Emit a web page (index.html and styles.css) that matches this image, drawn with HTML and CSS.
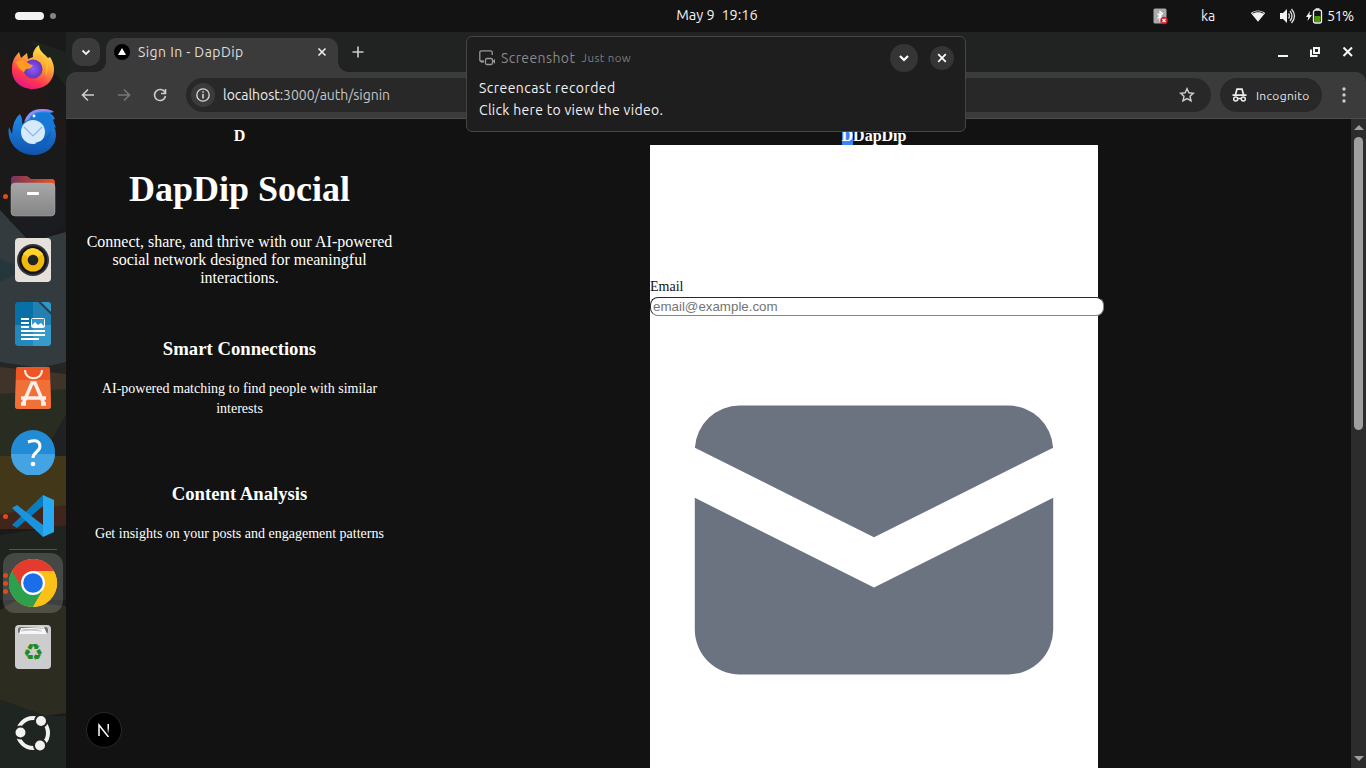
FILE: index.html
```html
<!DOCTYPE html>
<html lang="en">
<head>
<meta charset="utf-8">
<title>Sign In - DapDip</title>
<link rel="stylesheet" href="styles.css">
</head>
<body>
<header class="topbar">
  <div class="workspaces"><i class="pill"></i><i class="dot"></i></div>
  <div class="clock">May 9&nbsp; 19:16</div>
  <div class="status">
    <svg class="bt" width="15" height="17" viewBox="0 0 15 17"><rect x=".5" y=".5" width="13" height="15" rx="1.5" fill="#aaa"/><path d="M4.500 5.500l5 5-2.500 2v-9l2.500 2-5 5" fill="none" stroke="#fff" stroke-width="1.200"/><circle cx="11" cy="12.500" r="3.700" fill="#d3202f"/><path d="M9.500 11l3 3m0-3l-3 3" stroke="#fff" stroke-width="1.200"/></svg>
    <span class="lang">ka</span>
    <svg class="wifi" width="16" height="14" viewBox="0 0 16 14"><path d="M.8 4C5 .5 11 .5 15.200 4L8 12.800Z" fill="#f2f2f2"/><path d="M2.500 4.300C6 2.200 10 2.200 13.500 4.300" fill="none" stroke="#131313" stroke-width="1"/></svg>
    <svg class="sound" width="17" height="16" viewBox="0 0 17 16"><path d="M1 5h3l4-4v14l-4-4H1z" fill="#f2f2f2"/><path d="M9.500 5.500q2 2.500 0 5M11 3q4 5 0 10M12.500 1q6 7 0 14" fill="none" stroke="#ddd" stroke-width="1.300"/></svg>
    <svg class="battery" width="17" height="16" viewBox="0 0 17 16"><path d="M4 3L0 9h2.300L1.500 13 6 7H3.500z" fill="#f2f2f2"/><rect x="7.500" y="2" width="8" height="13" rx="2" fill="none" stroke="#f2f2f2" stroke-width="1.300"/><path d="M9.500 1h4" stroke="#f2f2f2" stroke-width="1.500"/><rect x="8.500" y="8" width="6" height="6" fill="#4e9a06"/></svg>
    <span class="percent">51%</span>
  </div>
</header>
<div class="desktop">
  <nav class="dock">
    <svg class="wallpaper" width="66" height="736" viewBox="0 0 66 736"><path fill="#1a1a1b" d="M0 0h66v736H0z"/><path fill="#211918" d="M0 18l12 12 54 58v25L22 85 0 115z"/><path fill="#1d241d" d="M30 8l36 12v35z"/><path fill="#343b3e" d="M0 178l30 32 36-10v192H0z"/><path fill="#1a1c20" d="M9 188l28 24 27-19V165z"/><path fill="#26363d" d="M0 226l24 12-24 12z"/><path fill="#252523" d="M0 330l40 6 26-6v14H0z"/><path fill="#40332a" d="M0 335l66 7v40H0z"/><path fill="#292c20" d="M0 362l66-5v70H0z"/><path fill="#202123" d="M66 382L44 422l22 10z"/><path fill="#423719" d="M0 424h66v58H0z"/><path fill="#40251c" d="M0 482l66-9v24H0z"/><path fill="#20241f" d="M0 503l66-10v75H0z"/><path fill="#2c2d20" d="M0 578l15-9 51 5v107l-20 3-46-16z"/><path fill="#1f2521" d="M0 668l46 16h20v52H0z"/></svg>
    <div class="app"><svg width="44" height="46" viewBox="0 0 44 46"><defs><linearGradient id="ff" x1=".8" y1="0" x2=".3" y2="1"><stop offset="0" stop-color="#fff44f"/><stop offset=".4" stop-color="#ffa436"/><stop offset=".75" stop-color="#ff3750"/><stop offset="1" stop-color="#e31587"/></linearGradient><radialGradient id="fp"><stop offset="0" stop-color="#9059ff"/><stop offset="1" stop-color="#6137b9"/></radialGradient></defs><path d="M4 12l4-5 2 6 6-5 1 6 5-2C21 7 25 2 28 0c0 5 4 8 7 11l2 2 2-1c4 6 5 13 3 19-3 8-10 13-20 13C9 44 0 35 1 23c0-4 1-8 3-11z" fill="url(#ff)"/><circle cx="22" cy="24" r="9.500" fill="url(#fp)"/><path d="M5 17q7-4 12 1 2 2 5 2-1 4-7 4l-2 3q-6-3-8-10z" fill="#ff9a22"/><path d="M27 12q7 2 8 7v12q3-9 1-16l-6-5z" fill="#ffbd32"/></svg></div>
    <div class="app"><svg width="50" height="48" viewBox="0 0 50 48"><defs><linearGradient id="tb" x2="0" y2="1"><stop stop-color="#2492f4"/><stop offset="1" stop-color="#0f53ac"/></linearGradient></defs><path d="M1 19l3 7Q5 11 12 6q3 5 2 10l3-2Q20 1 33 1q9 0 13 3l-4 1q4 3 5 6l-3 1q3 4 4 8l-2-1q2 3 2 7c0 13-10 21-23 21C10 47-2 34 1 19z" fill="url(#tb)"/><path d="M16 14Q20 2 33 1q9 0 13 3-13-2-20 1-3 2-5 6z" fill="#9c8bef"/><path d="M22 10q6-7 19-5 5 5 5 13l-9 7-12-10z" fill="#1878d8"/><circle cx="25" cy="24" r="12" fill="#d6eafb"/><path d="M16 19l9 9 9-9" fill="none" stroke="#86b8e8" stroke-width="1.200"/><circle cx="26" cy="8" r="1.400" fill="#fff"/><path d="M27 35q11-2 16-13-1 18-19 22l9-6z" fill="#0f61be"/></svg></div>
    <div class="app"><i class="run one"></i><svg width="46" height="42" viewBox="0 0 46 42"><defs><linearGradient id="fo"><stop stop-color="#75345b"/><stop offset="1" stop-color="#e95420"/></linearGradient><linearGradient id="fg" x2="0" y2="1"><stop stop-color="#a7a7a7"/><stop offset="1" stop-color="#858585"/></linearGradient></defs><path d="M1 4q0-3 3-3h13l4 3h21q3 0 3 4v10H1z" fill="url(#fo)"/><rect x="1" y="8" width="44" height="33" rx="4" fill="url(#fg)" stroke="#ababab" stroke-width=".5"/><rect x="17" y="17" width="12" height="3" rx="1" fill="#fff"/></svg></div>
    <div class="app"><svg width="38" height="46" viewBox="0 0 38 46"><rect x="1" y="1" width="36" height="44" rx="4" fill="#e5e1da"/><circle cx="19" cy="23" r="16" fill="#34343b"/><circle cx="19" cy="23" r="14" fill="#11151c"/><circle cx="19" cy="23" r="11.500" fill="#f0b90b"/><path d="M19 23L9 17q9-12 20 0z" fill="#ffd22d"/><circle cx="19" cy="23" r="5.300" fill="#222528"/></svg></div>
    <div class="app"><svg width="38" height="46" viewBox="0 0 38 46"><path d="M4 1h20l13 13v27q0 4-4 4H5q-4 0-4-4V5q0-4 3-4z" fill="#0870a6"/><path d="M19 1h5l13 13v10H19z" fill="#2380b2"/><path d="M1 24h36v17q0 4-4 4H5q-4 0-4-4z" fill="#2389bd"/><path d="M19 24h18v17q0 4-4 4H19z" fill="#369acb"/><path d="M27 1h7q3 0 3 3v7z" fill="#279bcc"/><path d="M7 18h8M7 22h8M7 26h8M7 30h24M7 34h24M7 38h18" stroke="#fff" stroke-width="2"/><rect x="17.500" y="17.500" width="13" height="9" rx="1" fill="#3098cc" stroke="#fff"/><path d="M18 26v-2l3-3 3 3 3-2 3 3v1z" fill="#fff"/></svg></div>
    <div class="app"><svg width="36" height="44" viewBox="0 0 36 44"><path d="M2 1h32q1 0 1 3l1 36q0 3-3 3H3q-3 0-3-3L1 4q0-3 1-3z" fill="#ee5723"/><path d="M1 14h34l1 26q0 3-3 3H3q-3 0-3-3z" fill="#f17038"/><path d="M10 4c0 11 17 11 17 0" fill="none" stroke="#fff1e9" stroke-width="2"/><path d="M8 38l9-21h3l9 21M6 32h25M6 38h5m15 0h5" fill="none" stroke="#fff1e9" stroke-width="3.500"/></svg></div>
    <div class="app"><svg width="46" height="46" viewBox="0 0 46 46"><circle cx="23" cy="23" r="22" fill="#228bd5"/><path d="M1 25h44a22 22 0 01-44 0z" fill="#44a4e3"/><path d="M18 13q11-4 12 4c0 6-7 6-7 12" fill="none" stroke="#fff" stroke-width="3"/><circle cx="23" cy="35" r="2.300" fill="#fff"/></svg></div>
    <div class="app"><i class="run one"></i><svg width="44" height="44" viewBox="0 0 44 44"><path d="M1 31L32 1v11L6 34z" fill="#087cc1"/><path d="M1 14l5-3 26 20v12z" fill="#1b94dc"/><path d="M32 1l11 5v32l-11 5z" fill="#28a9f2"/></svg></div>
    <i class="divider"></i>
    <div class="app chrome-app"><i class="run three"></i><svg width="48" height="48" viewBox="0 0 48 48"><circle cx="24" cy="24" r="24" fill="#fbc116"/><path d="M24 24L3.200 12A24 24 0 0144.800 12z" fill="#e33b2e"/><path d="M24 24L3.200 12A24 24 0 0024 48l10.400-18z" fill="#2da04e"/><path d="M24 12h20.800A24 24 0 0124 48l10.400-18z" fill="#fbc116"/><path d="M3.200 12L13.600 30A12 12 0 0124 12z" fill="#e33b2e"/><circle cx="24" cy="24" r="12" fill="#fff"/><circle cx="24" cy="24" r="9.800" fill="#1a6fe8"/></svg></div>
    <div class="app"><svg width="38" height="46" viewBox="0 0 38 46"><rect x="1" y="1" width="36" height="44" rx="4" fill="#cdcdcd"/><rect x="4" y="3" width="30" height="7" rx="3" fill="#6f6f6f"/><path d="M5 10l2-6 23-1 3 7z" fill="#f8f8f8"/><path d="M8 5l20 2M7 7l24-3" stroke="#aaa" stroke-width=".7"/><text class="recycle" x="19" y="36" text-anchor="middle">♻</text></svg></div>
    <div class="app grid-app"><svg width="36" height="36" viewBox="0 0 36 36"><circle cx="18" cy="18" r="15" fill="none" stroke="#f2f2f2" stroke-width="4"/><g fill="#f2f2f2" stroke="#202521" stroke-width="2"><circle cx="5.500" cy="17.500" r="6"/><circle cx="26" cy="6" r="6"/><circle cx="25" cy="30.500" r="6"/></g></svg></div>
  </nav>
  <main class="browser">
    <div class="tabs">
      <span class="tabsearch"><svg width="10" height="7" viewBox="0 0 10 7"><path d="M1.500 1.500L5 5l3.500-3.500" fill="none" stroke="#eee" stroke-width="1.800"/></svg></span>
      <div class="tab"><svg width="16" height="16" viewBox="0 0 16 16"><circle cx="8" cy="8" r="8"/><path d="M8 4l4 7H4z" fill="#fff"/></svg><span class="tabtitle">Sign In - DapDip</span><svg class="tabclose" width="10" height="10" viewBox="0 0 10 10"><path d="M1.500 1.500l7 7m0-7l-7 7" stroke="#eee" stroke-width="1.600"/></svg></div>
      <svg class="plus" width="12" height="12" viewBox="0 0 12 12"><path d="M6 .5v11M.5 6h11" stroke="#ccc" stroke-width="1.600"/></svg>
      <div class="winbuttons"><svg width="76" height="14" viewBox="0 0 76 14"><path d="M1 11h10" stroke="#f5f5f5" stroke-width="2"/><path d="M37 3h5v5h-5zM34 4.500V11h6.500" fill="none" stroke="#f5f5f5" stroke-width="2"/><path d="M66.500 2.500l8.500 8.500m0-8.500L66.500 11" stroke="#f5f5f5" stroke-width="2"/></svg></div>
    </div>
    <div class="toolbar">
      <svg class="back" width="14" height="14" viewBox="0 0 14 14"><path d="M13 7H2m5-5.500L1.500 7 7 12.500" fill="none" stroke="#ccc" stroke-width="1.600"/></svg>
      <svg class="forward" width="14" height="14" viewBox="0 0 14 14"><path d="M1 7h11M7 1.500L12.500 7 7 12.500" fill="none" stroke="#777" stroke-width="1.600"/></svg>
      <svg class="reload" width="14" height="14" viewBox="0 0 14 14"><path d="M12 4.500A5.500 5.500 0 1012.500 8M12.500 1v4.500H8" fill="none" stroke="#ccc" stroke-width="1.600"/></svg>
      <div class="address"><span class="info"><svg width="14" height="14" viewBox="0 0 14 14"><circle cx="7" cy="7" r="6.200" fill="none" stroke="#ddd" stroke-width="1.300"/><path d="M7 6v4.500M7 3.300v1.500" stroke="#ddd" stroke-width="1.500"/></svg></span><span class="url"><b>localhost</b>:3000/auth/signin</span><svg class="star" width="16" height="16" viewBox="0 0 16 16"><path d="M8 1.800l1.900 4 4.400.5-3.300 3 1 4.400L8 11.500l-4 2.200 1-4.400-3.300-3 4.400-.5z" fill="none" stroke="#ccc" stroke-width="1.500"/></svg></div>
      <div class="incognito"><svg width="15" height="14" viewBox="0 0 15 14"><path d="M.5 7.200h14M3.500 6.500L5 1.200h5l1.500 5.300" fill="none" stroke="#eee" stroke-width="1.700"/><g fill="none" stroke="#eee" stroke-width="1.500"><circle cx="3.700" cy="11" r="2"/><circle cx="11.300" cy="11" r="2"/><path d="M5.500 10.500h4"/></g></svg><span>Incognito</span></div>
      <svg class="more" width="4" height="16" viewBox="0 0 4 16" fill="#ccc"><circle cx="2" cy="2" r="1.700"/><circle cx="2" cy="8" r="1.700"/><circle cx="2" cy="14" r="1.700"/></svg>
    </div>
    <div class="viewport">
      <section class="intro">
        <div class="mark">D</div>
        <h1>DapDip Social</h1>
        <p class="lead">Connect, share, and thrive with our AI-powered<br>social network designed for meaningful<br>interactions.</p>
        <article class="feature"><h3>Smart Connections</h3><p>AI-powered matching to find people with similar<br>interests</p></article>
        <article class="feature"><h3>Content Analysis</h3><p>Get insights on your posts and engagement patterns</p></article>
      </section>
      <section class="signin">
        <div class="mark"><span class="selected">D</span>DapDip</div>
        <form class="card"><label for="email">Email</label><input id="email" type="email" placeholder="email@example.com"><svg class="mail" viewBox="0 0 20 20" fill="#6b7280"><path d="M2.003 5.884L10 9.882l7.997-3.998A2 2 0 0016 4H4a2 2 0 00-1.997 1.884z"/><path d="M18 8.118l-8 4-8-4V14a2 2 0 002 2h12a2 2 0 002-2V8.118z"/></svg></form>
      </section>
      <div class="scrollbar"><i class="up"></i><i class="thumb"></i><i class="down"></i></div>
      <div class="devbadge"><svg width="14" height="14" viewBox="0 0 14 14"><defs><linearGradient id="ns" x2="0" y2="1"><stop offset=".4" stop-color="#fff"/><stop offset="1" stop-color="#fff" stop-opacity="0"/></linearGradient></defs><path d="M2 13V2l9.500 12" fill="none" stroke="#fff" stroke-width="1.500"/><path d="M10.500 1h1.500v10h-1.500z" fill="url(#ns)"/></svg></div>
    </div>
  </main>
</div>
<aside class="toast">
  <div class="toasthead"><svg width="17" height="16" viewBox="0 0 17 16"><path d="M4 11.500H2.500q-1.700 0-1.700-1.700V2.500Q.8.800 2.500.8h9q1.700 0 1.700 1.700V5" fill="none" stroke="#999" stroke-width="1.300"/><path d="M1 10.500h4v2H2z" fill="#999"/><rect x="6.500" y="8.500" width="7" height="6" rx="1.500" fill="none" stroke="#999" stroke-width="1.300"/><path d="M13.500 11l2.500-2v5z" fill="#999"/></svg><span class="toastapp">Screenshot</span><span class="toasttime">Just now</span><span class="round expand"><svg width="12" height="8" viewBox="0 0 12 8"><path d="M2 2l4 4 4-4" fill="none" stroke="#fff" stroke-width="2.200"/></svg></span><span class="round dismiss"><svg width="10" height="10" viewBox="0 0 10 10"><path d="M1.200 1.200l7.600 7.600m0-7.600L1.200 8.800" stroke="#fff" stroke-width="1.700"/></svg></span></div>
  <div class="toastbody"><span class="line1">Screencast recorded</span><span class="line2">Click here to view the video.</span></div>
</aside>
</body>
</html>
```
FILE: styles.css
```css
* { box-sizing: border-box; }
body { margin: 0; width: 1366px; height: 768px; overflow: hidden; display: flex; flex-direction: column; background: #131313; font-family: Ubuntu, "Noto Sans", sans-serif; color: #f2f2f2; position: relative; }
svg { display: block; flex: none; }
.topbar { height: 32px; flex: none; display: grid; grid-template-columns: 667px 100px 1fr; align-items: center; font-size: 14.5px; line-height: 20px; }
.workspaces { display: flex; align-items: center; gap: 6px; padding-left: 15px; }
.pill { width: 29px; height: 8px; border-radius: 4px; background: #f2f2f2; }
.dot { width: 6px; height: 6px; border-radius: 50%; background: #858585; }
.clock { text-align: center; white-space: nowrap; letter-spacing: 0; padding-bottom: 2px; }
.status { display: flex; align-items: center; justify-content: flex-end; padding-right: 12px; }
.bt { margin-right: 1px; }
.lang { margin: 0 32px 0 32px; width: 16px; font-size: 14px; }
.wifi { margin-left: 1px; }
.sound { margin-left: 13px; }
.battery { margin-left: 10px; }
.percent { margin-left: 4px; width: 27px; letter-spacing: -.7px; white-space: nowrap; }
.desktop { flex: 1; min-height: 0; display: flex; }
.dock { width: 66px; position: relative; padding-top: 4px; display: flex; flex-direction: column; align-items: center; flex: none; }
.wallpaper { position: absolute; inset: 0; }
.app { position: relative; width: 60px; height: 64px; display: flex; align-items: center; justify-content: center; flex: none; }
.run { position: absolute; left: 0; width: 5px; height: 5px; border-radius: 50%; background: #df4b16; }
.three { top: 20px; box-shadow: 0 8px #df4b16, 0 16px #df4b16; }
.recycle { font: 23px "DejaVu Sans", sans-serif; fill: #218a21; }
.divider { position: relative; width: 48px; height: 1px; background: #555; margin: 1px 0 3px; flex: none; }
.chrome-app { height: 60px; border-radius: 12px; background: #ffffff2b; margin-bottom: 2px; }
.grid-app { margin-top: 22px; }
.browser { width: 1300px; display: flex; flex-direction: column; background: #202322; }
.tabs { height: 40px; padding: 6px 12px 0 6px; display: flex; flex: none; }
.tabsearch { width: 28px; height: 28px; border-radius: 10px; background: #3b3b3b; display: flex; align-items: center; justify-content: center; }
.tab { margin-left: 6px; width: 232px; height: 34px; background: #3b3b3b; border-radius: 10px 10px 0 0; display: flex; align-items: center; padding: 0 11px 6px 8px; position: relative; }
.tab::before, .tab::after { content: ""; position: absolute; bottom: 0; width: 10px; height: 10px; }
.tab::before { left: -10px; background: radial-gradient(circle at 0 0, transparent 9.5px, #3b3b3b 10px); }
.tab::after { right: -10px; background: radial-gradient(circle at 100% 0, transparent 9.5px, #3b3b3b 10px); }
.tabtitle { margin-left: 8px; font-size: 14px; letter-spacing: .43px; color: #ddd; white-space: nowrap; }
.tabclose { margin-left: auto; }
.plus { margin: 8px 0 0 14px; }
.winbuttons { margin: 7px 1px 0 auto; }
.toolbar { height: 47px; flex: none; background: #3b3b3b; border-bottom: 1px solid #4b4b4b; border-radius: 10px 10px 0 0; display: flex; align-items: center; padding: 0 20px 0 15px; }
.forward { margin-left: 22px; }
.reload { margin-left: 22px; }
.address { margin-left: 19px; flex: none; width: 1025px; height: 34px; border-radius: 17px; background: #282828; display: flex; align-items: center; padding: 0 16px 0 5px; }
.info { width: 24px; height: 24px; border-radius: 50%; background: #3b3b3b; display: flex; align-items: center; justify-content: center; }
.url { font-size: 14px; color: #c5c5c5; margin-left: 8px; letter-spacing: -.03px; }
.url b { font-weight: 400; color: #eee; }
.star { margin-left: auto; }
.incognito { margin-left: 9px; flex: none; width: 102px; height: 34px; border-radius: 17px; background: #282828; display: flex; align-items: center; padding-left: 12px; gap: 9px; font-size: 12px; letter-spacing: .3px; color: #e6e6e6; }
.more { margin-left: 20px; }
.viewport { flex: 1; min-height: 0; display: flex; position: relative; background: #121212; font-family: "Liberation Serif", serif; color: #fff; overflow: hidden; }
.intro { width: 347px; padding-top: 8px; text-align: center; }
.mark { font-weight: 700; font-size: 16px; line-height: 18px; height: 18px; text-align: center; }
h1 { margin: 24px 0; font-size: 36px; line-height: 40px; }
.lead { margin: 0; font-size: 16px; line-height: 18px; }
.feature { margin-top: 51px; }
.feature h3 { margin: 0 0 19px; font-size: 18.72px; line-height: 22px; }
.feature p { margin: 0; font-size: 14px; line-height: 20px; }
.feature + .feature { margin-top: 64px; }
.signin { width: 448px; margin-left: 237px; padding-top: 8px; }
.selected { display: inline-block; height: 18px; background: #3b82f6; }
.card { background: #fff; height: 623px; padding-top: 132px; }
.card label { display: block; color: #111; font-size: 14px; line-height: 20px; }
.card input { display: block; width: 454px; height: 19px; border: 1px solid; border-color: #2a2a2a #858585 #858585 #2a2a2a; border-radius: 8px; background: #fff; padding: 0 2px; font: 13.333px "Liberation Sans", sans-serif; outline: 0; }
.card input::placeholder { color: #757575; opacity: 1; }
.mail { width: 448px; height: 448px; }
.scrollbar { width: 15px; margin-left: auto; background: #2c2c2c; display: flex; flex-direction: column; align-items: center; }
.up { border: 5px solid transparent; border-top: 0; border-bottom-color: #9f9f9f; margin-top: 6px; }
.thumb { width: 9px; height: 293px; border-radius: 5px; background: #9f9f9f; margin-top: 7px; }
.down { border: 5px solid transparent; border-bottom: 0; border-top-color: #9f9f9f; margin: auto 0 7px; }
.devbadge { position: absolute; left: 20px; bottom: 20px; width: 36px; height: 36px; border-radius: 50%; background: #000; border: 1px solid #292929; display: flex; align-items: center; justify-content: center; }
.toast { position: absolute; left: 466px; top: 36px; width: 500px; height: 96px; background: #1e1e1e; border: 1px solid #454545; border-radius: 6px; padding: 7px 11px 0 12px; font-size: 14px; }
.toasthead { height: 28px; display: flex; align-items: center; }
.toastapp { color: #888; margin-left: 5px; letter-spacing: .4px; }
.toasttime { color: #7d7d7d; font-size: 11.5px; margin: -1px 0 0 6px; letter-spacing: .4px; }
.round { border-radius: 50%; background: #353535; display: flex; align-items: center; justify-content: center; }
.expand { width: 28px; height: 28px; margin-left: auto; }
.dismiss { width: 24px; height: 24px; margin-left: 12px; }
.toastbody { display: flex; flex-direction: column; align-items: flex-start; padding-top: 5px; line-height: 22px; }
.toastbody span { white-space: nowrap; }
.line1 { letter-spacing: .45px; }
.line2 { letter-spacing: .3px; }
```
